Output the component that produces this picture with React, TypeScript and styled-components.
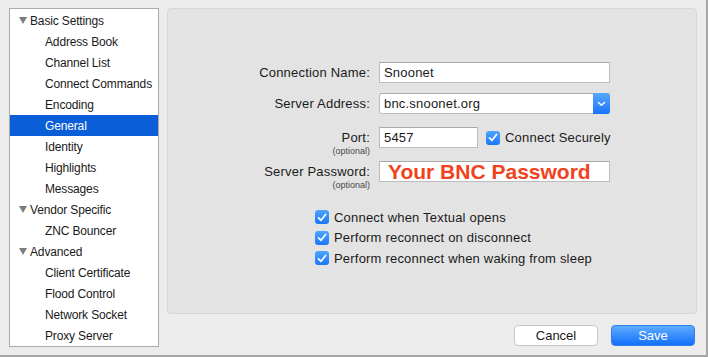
import React from 'react';
import styled, {createGlobalStyle} from 'styled-components';

const GlobalStyle = createGlobalStyle`
	body {
		margin: 0;
		font-family: "Liberation Sans", Arial, sans-serif;
		background: #ececec;
	}
`;

const Window = styled.div`
	box-sizing: border-box;
	width: 708px;
	height: 357px;
	display: flex;
	padding: 8px 0 0 9px;
	background: #ececec;
	border-right: 2px solid #a6a6a6;
	border-bottom: 2px solid #a6a6a6;
	color: #1a1a1a;
`;

const Sidebar = styled.ul`
	box-sizing: border-box;
	width: 150px;
	height: 339px;
	margin: 0;
	padding: 1px 0 0;
	list-style: none;
	background: #fff;
	border: 1px solid #a9a9a9;
	font-size: 12px;
	letter-spacing: -0.15px;
`;

const Item = styled.li<{ $group?: boolean; $active?: boolean }>`
	height: 21px;
	display: flex;
	align-items: center;
	padding-left: ${p => (p.$group ? '9px' : '35px')};
	background: ${p => (p.$active ? '#0a5ed8' : 'transparent')};
	color: ${p => (p.$active ? '#fff' : '#1a1a1a')};
	white-space: nowrap;
`;

const Disclosure = styled.span`
	width: 0;
	height: 0;
	margin-right: 3px;
	border-left: 4px solid transparent;
	border-right: 4px solid transparent;
	border-top: 7px solid #7d7d7d;
`;

const Main = styled.div`
	display: flex;
	flex-direction: column;
	margin-left: 8px;
	width: 530px;
`;

const Panel = styled.div`
	box-sizing: border-box;
	height: 306px;
	padding-top: 53px;
	background: #e3e3e3;
	border: 1px solid #d7d7d7;
	border-radius: 4px;
	font-size: 13px;
	letter-spacing: 0.2px;
`;

const Row = styled.div<{ $gap: number }>`
	display: flex;
	align-items: flex-start;
	margin-top: ${p => p.$gap}px;
`;

const LabelBox = styled.div`
	width: 202px;
	display: flex;
	flex-direction: column;
	align-items: flex-end;
	margin-right: 9px;
`;

const Label = styled.span`
	line-height: 21px;
`;

const Optional = styled.span`
	font-size: 9px;
	line-height: 10px;
	margin-top: -2px;
	color: #4a4a4a;
	letter-spacing: 0;
`;

const Field = styled.div<{ $width: number }>`
	box-sizing: border-box;
	width: ${p => p.$width}px;
	height: 21px;
	display: flex;
	align-items: center;
	padding-left: 4px;
	background: #fff;
	border: 1px solid #bdbdbd;
	border-top-color: #a9a9a9;
`;

const Combo = styled(Field)`
	border-radius: 3px;
`;

const ComboText = styled.span`
	flex: 1;
`;

const ComboButton = styled.span`
	width: 17px;
	height: 21px;
	margin: -1px -1px -1px 0;
	display: flex;
	align-items: center;
	justify-content: center;
	border-radius: 0 3px 3px 0;
	background: linear-gradient(#58a8ff, #1a73fb);
`;

const Secret = styled.span`
	font-size: 21px;
	font-weight: bold;
	color: #f0431d;
	letter-spacing: 0;
	line-height: 21px;
	padding-left: 4px;
`;

const Check = styled.label<{ $inline?: boolean }>`
	display: flex;
	align-items: center;
	height: ${p => (p.$inline ? '21px' : '20px')};
	margin-left: ${p => (p.$inline ? '8px' : '0')};
	white-space: nowrap;
`;

const Box = styled.span`
	width: 14px;
	height: 14px;
	margin-right: 5px;
	border-radius: 3px;
	display: flex;
	align-items: center;
	justify-content: center;
	background: linear-gradient(#4ea5ff, #1b76f6);
	flex-shrink: 0;
`;

const Options = styled.div`
	display: flex;
	flex-direction: column;
	margin: 17px 0 0 147px;
	gap: 0.5px;
`;

const Footer = styled.div`
	display: flex;
	justify-content: flex-end;
	gap: 13px;
	margin-top: 11px;
	padding-right: 2px;
`;

const Button = styled.button<{ $primary?: boolean }>`
	box-sizing: border-box;
	width: 84px;
	height: 21px;
	padding: 0;
	font-family: inherit;
	font-size: 13px;
	border-radius: 4px;
	border: 1px solid ${p => (p.$primary ? '#2e7ef2' : '#c6c6c6')};
	background: ${p => (p.$primary ? 'linear-gradient(#5eacff, #1470fa)' : '#fff')};
	color: ${p => (p.$primary ? '#fff' : '#1a1a1a')};
`;

const Tick = () => (
	<svg width="10" height="9" viewBox="0 0 10 9">
		<path d="M1.5 4.8 L4 7.3 L8.6 1.4" fill="none" stroke="#fff" strokeWidth="1.7"
			  strokeLinecap="round" strokeLinejoin="round"/>
	</svg>
);

const Chevron = () => (
	<svg width="9" height="6" viewBox="0 0 9 6">
		<path d="M1.5 1.5 L4.5 4.3 L7.5 1.5" fill="none" stroke="#fff" strokeWidth="1.5"
			  strokeLinecap="round" strokeLinejoin="round"/>
	</svg>
);

type NavItem = { title: string; group?: boolean; active?: boolean };

const nav: NavItem[] = [
	{title: 'Basic Settings', group: true},
	{title: 'Address Book'},
	{title: 'Channel List'},
	{title: 'Connect Commands'},
	{title: 'Encoding'},
	{title: 'General', active: true},
	{title: 'Identity'},
	{title: 'Highlights'},
	{title: 'Messages'},
	{title: 'Vendor Specific', group: true},
	{title: 'ZNC Bouncer'},
	{title: 'Advanced', group: true},
	{title: 'Client Certificate'},
	{title: 'Flood Control'},
	{title: 'Network Socket'},
	{title: 'Proxy Server'},
];

const options = [
	'Connect when Textual opens',
	'Perform reconnect on disconnect',
	'Perform reconnect when waking from sleep',
];

export default function App() {
	return (
		<>
			<GlobalStyle/>
			<Window>
				<Sidebar>
					{nav.map(item => (
						<Item key={item.title} $group={item.group} $active={item.active}>
							{item.group && <Disclosure/>}
							{item.title}
						</Item>
					))}
				</Sidebar>
				<Main>
					<Panel>
						<Row $gap={0}>
							<LabelBox><Label>Connection Name:</Label></LabelBox>
							<Field $width={231}>Snoonet</Field>
						</Row>
						<Row $gap={10}>
							<LabelBox><Label>Server Address:</Label></LabelBox>
							<Combo $width={231}>
								<ComboText>bnc.snoonet.org</ComboText>
								<ComboButton><Chevron/></ComboButton>
							</Combo>
						</Row>
						<Row $gap={13}>
							<LabelBox>
								<Label>Port:</Label>
								<Optional>(optional)</Optional>
							</LabelBox>
							<Field $width={99}>5457</Field>
							<Check $inline>
								<Box><Tick/></Box>
								Connect Securely
							</Check>
						</Row>
						<Row $gap={5}>
							<LabelBox>
								<Label>Server Password:</Label>
								<Optional>(optional)</Optional>
							</LabelBox>
							<Field $width={231}>
								<Secret>Your BNC Password</Secret>
							</Field>
						</Row>
						<Options>
							{options.map(text => (
								<Check key={text}>
									<Box><Tick/></Box>
									{text}
								</Check>
							))}
						</Options>
					</Panel>
					<Footer>
						<Button>Cancel</Button>
						<Button $primary>Save</Button>
					</Footer>
				</Main>
			</Window>
		</>
	);
}
